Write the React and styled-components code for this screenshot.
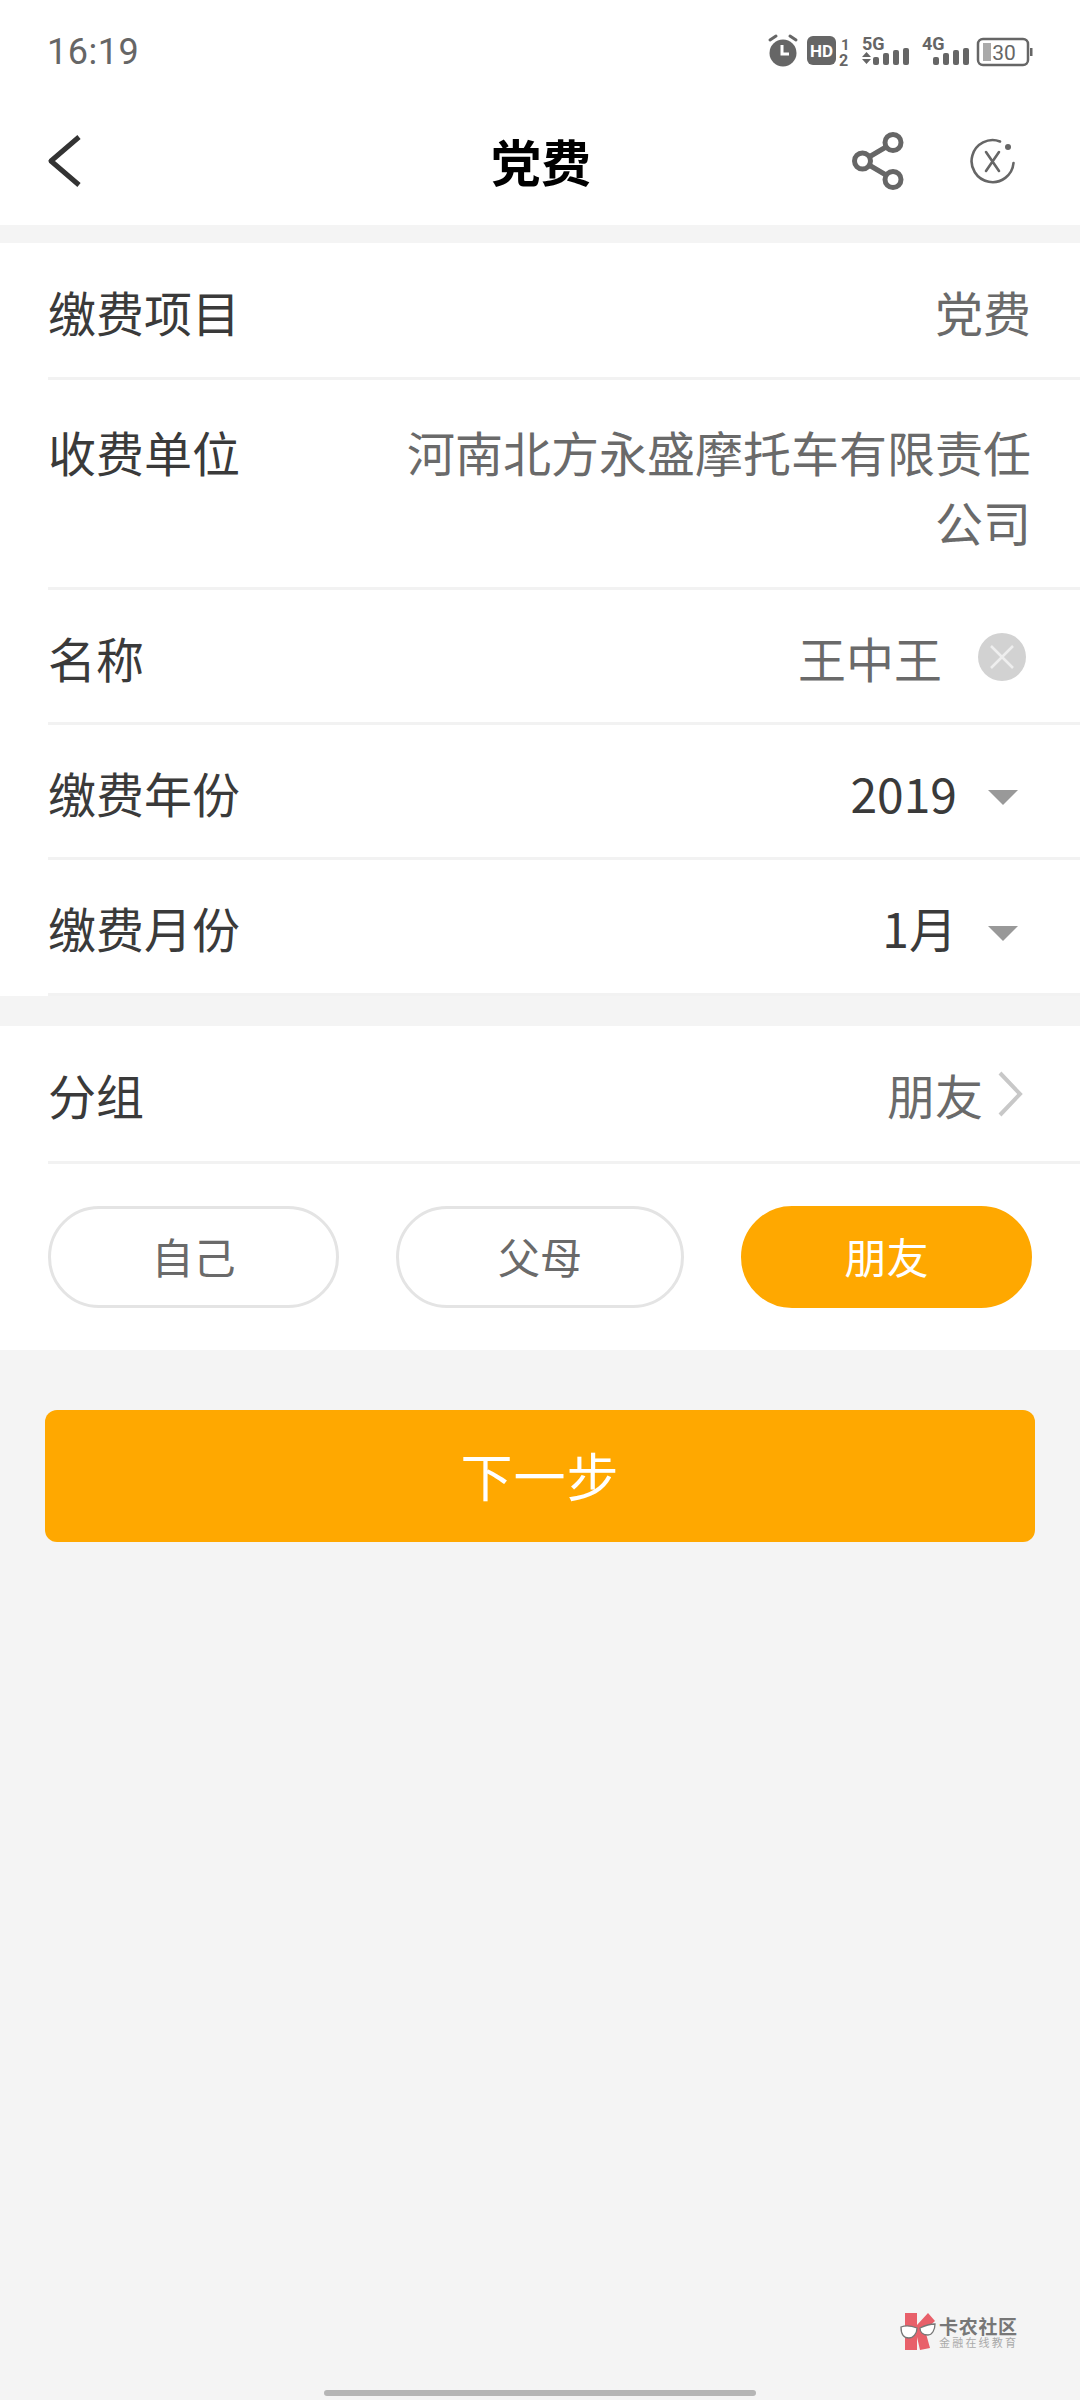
import React from 'react';
import styled, { createGlobalStyle } from 'styled-components';

const orange = '#ffa800';
const line = '#f2f2f2';
const grey = '#f4f4f4';
const cjk = '"Noto Sans CJK SC", "Noto Sans", sans-serif';

const Global = createGlobalStyle`
  html, body { margin: 0; padding: 0; background: ${grey}; }
  * { box-sizing: border-box; }
`;

const Page = styled.div`
  position: relative;
  width: 1080px;
  height: 2400px;
  overflow: hidden;
  background: ${grey};
  font-family: ${cjk};
`;

const Top = styled.div`
  height: 225px;
  background: #fff;
`;

const StatusBar = styled.div`
  height: 100px;
  padding: 0 46px 0 47px;
  display: flex;
  align-items: center;
  justify-content: space-between;
  color: #666;
`;

const Clock = styled.span`
  font-family: "Roboto", sans-serif;
  font-size: 36px;
  letter-spacing: 0.5px;
  padding-top: 3px;
`;

const StatusIcons = styled.svg`
  display: block;
  width: 268px;
  height: 40px;
`;

const NavBar = styled.div`
  height: 125px;
  padding: 0 64px 3px 46px;
  display: flex;
  align-items: center;
  justify-content: space-between;
  position: relative;
`;

const NavTitle = styled.h1`
  position: absolute;
  left: 0;
  right: 0;
  top: 29px;
  margin: 0;
  padding-left: 2px;
  text-align: center;
  font-size: 50px;
  line-height: 62px;
  font-weight: 700;
  color: #000;
`;

const NavActions = styled.div`
  display: flex;
  align-items: center;
  gap: 66px;
`;

const Section = styled.section`
  background: #fff;
  margin-top: ${p => p.$top}px;
`;

const Row = styled.div`
  display: flex;
  justify-content: space-between;
  align-items: ${p => (p.$tall ? 'flex-start' : 'center')};
  height: ${p => p.$h}px;
  margin-left: 48px;
  padding: ${p => (p.$tall ? '36px 49px 0 0' : '1px 49px 0 0')};
  border-bottom: 3px solid ${line};
`;

const Label = styled.span`
  font-size: 48px;
  line-height: 70px;
  color: #3a3a3a;
  white-space: nowrap;
`;

const Value = styled.span`
  font-size: 48px;
  line-height: 70px;
  color: ${p => (p.$dark ? '#3a3a3a' : '#6a6a6a')};
  text-align: right;
  width: ${p => (p.$wrap ? '625px' : 'auto')};
`;

const ValueGroup = styled.div`
  display: flex;
  align-items: center;
  gap: ${p => p.$gap}px;
  padding-right: ${p => p.$pad || 0}px;
`;

const Caret = styled.span`
  display: block;
  width: 0;
  height: 0;
  margin-top: 12px;
  border-left: 15px solid transparent;
  border-right: 15px solid transparent;
  border-top: 15px solid #999;
`;

const Pills = styled.div`
  height: 186px;
  padding: 42px 48px 42px 48px;
  display: flex;
  justify-content: space-between;
`;

const Pill = styled.div`
  width: ${p => p.$w}px;
  height: 102px;
  border-radius: 51px;
  padding-bottom: 4px;
  display: flex;
  align-items: center;
  justify-content: center;
  font-size: 42px;
  color: ${p => (p.$on ? '#fff' : '#6a6a6a')};
  background: ${p => (p.$on ? orange : '#fff')};
  border: 3px solid ${p => (p.$on ? orange : '#e4e4e4')};
`;

const NextButton = styled.button`
  display: block;
  width: 990px;
  height: 132px;
  margin: 60px 0 0 45px;
  padding: 0 0 4px;
  border: none;
  border-radius: 12px;
  background: ${orange};
  color: #fff;
  font-family: ${cjk};
  font-size: 52px;
  letter-spacing: 1px;
`;

const Watermark = styled.div`
  position: absolute;
  left: 900px;
  top: 2313px;
  display: flex;
  align-items: center;
  gap: 3px;
  color: #777;
`;

const MarkText = styled.div`
  display: flex;
  flex-direction: column;
  align-items: flex-start;
`;

const MarkTitle = styled.span`
  font-size: 19px;
  line-height: 20px;
  font-weight: 700;
  letter-spacing: 0.7px;
`;

const MarkSub = styled.span`
  font-size: 11px;
  line-height: 13px;
  letter-spacing: 2.2px;
  color: #aaa;
`;

const HomeBar = styled.div`
  position: absolute;
  left: 324px;
  top: 2390px;
  width: 432px;
  height: 6px;
  border-radius: 3px;
  background: #b5b5b5;
`;

const Bars = ({ x }) => (
  <g fill="#666">
    {[8, 12, 15, 17].map((h, i) => (
      <rect key={i} x={x + i * 10} y={35 - h} width="6" height={h} rx="2" />
    ))}
  </g>
);

const StatusGlyphs = () => (
  <StatusIcons viewBox="0 0 268 40">
    <g stroke="#666" strokeWidth="3" fill="none" strokeLinecap="round">
      <path d="M4 10l6-4M24 6l6 4" />
    </g>
    <circle cx="17" cy="23" r="13.5" fill="#666" />
    <path d="M16 15v9h7" stroke="#fff" strokeWidth="3" fill="none" />
    <rect x="41" y="6" width="29" height="29" rx="6" fill="#666" />
    <text x="55.5" y="26.5" textAnchor="middle" fontSize="17" fontWeight="700" fontFamily="Roboto" fill="#fff">HD</text>
    <text x="75" y="20" fontSize="15" fontWeight="700" fontFamily="Roboto" fill="#666">1</text>
    <text x="73" y="36" fontSize="16" fontWeight="700" fontFamily="Roboto" fill="#666">2</text>
    <text x="96" y="20" fontSize="18" fontWeight="700" fontFamily="Roboto" fill="#666">5G</text>
    <path d="M96 27l4.500-5 4.500 5zM96 29h9l-4.500 5z" fill="#666" />
    <Bars x={107} />
    <text x="156" y="20" fontSize="18" fontWeight="700" fontFamily="Roboto" fill="#666">4G</text>
    <Bars x={167} />
    <rect x="212" y="9" width="50" height="26" rx="5" fill="#fff" stroke="#666" strokeWidth="2.5" />
    <rect x="217" y="13" width="8" height="18" fill="#aaa" />
    <text x="238" y="30" textAnchor="middle" fontSize="21" fontFamily="Roboto" fill="#666">30</text>
    <rect x="264" y="18" width="2.500" height="8" fill="#666" />
  </StatusIcons>
);

const BackIcon = () => (
  <svg width="36" height="52" viewBox="0 0 36 52">
    <path d="M33 2L5 26l28 24" fill="none" stroke="#333" strokeWidth="5" strokeLinejoin="round" />
  </svg>
);

const ShareIcon = () => (
  <svg width="52" height="58" viewBox="0 0 52 58">
    <g fill="none" stroke="#666" strokeWidth="5">
      <circle cx="41" cy="10.500" r="8" />
      <circle cx="41" cy="47.500" r="8" />
      <circle cx="10.500" cy="29" r="8" />
      <path d="M17 25l17-10M17 33l17 10" />
    </g>
  </svg>
);

const CloseRing = () => (
  <svg width="46" height="46" viewBox="0 0 46 46">
    <g fill="none" stroke="#666" strokeWidth="2.6" strokeLinecap="round">
      <path d="M30 3.500A21 21 0 1 0 43.500 25" />
      <path d="M16 14l13 19M29 14L16 33" />
    </g>
    <circle cx="38" cy="9" r="3" fill="#666" />
  </svg>
);

const ClearIcon = () => (
  <svg width="48" height="48" viewBox="0 0 48 48">
    <circle cx="24" cy="24" r="24" fill="#d2d2d2" />
    <path d="M13 13l22 22M35 13L13 35" stroke="#eee" strokeWidth="2.500" />
  </svg>
);

const ChevronIcon = () => (
  <svg width="26" height="46" viewBox="0 0 26 46">
    <path d="M3 2l20 21L3 44" fill="none" stroke="#c8c8c8" strokeWidth="4" />
  </svg>
);

const KanongLogo = () => (
  <svg width="36" height="38" viewBox="0 0 36 38">
    <path d="M5 0h12v12L28 0l7 8-10 9 5 18-10 2-3-13v13H5z" fill="#e8606a" />
    <g fill="#fff" stroke="#777" strokeWidth="1.3">
      <path d="M1 14c5-2 11-1 16 1 0 6-4 10-8 10-5 0-8-4-8-11z" />
      <path d="M20 15c4-2 10-4 15-4 0 6-3 11-7 11-5 0-8-3-8-7z" />
    </g>
  </svg>
);

const App = () => (
  <Page>
    <Global />
    <Top>
      <StatusBar>
        <Clock>16:19</Clock>
        <StatusGlyphs />
      </StatusBar>
      <NavBar>
        <BackIcon />
        <NavTitle>党费</NavTitle>
        <NavActions>
          <ShareIcon />
          <CloseRing />
        </NavActions>
      </NavBar>
    </Top>

    <Section $top={18}>
      <Row $h={137}>
        <Label>缴费项目</Label>
        <Value>党费</Value>
      </Row>
      <Row $h={210} $tall>
        <Label>收费单位</Label>
        <Value $wrap>河南北方永盛摩托车有限责任公司</Value>
      </Row>
      <Row $h={135}>
        <Label>名称</Label>
        <ValueGroup $gap={36} $pad={5}>
          <Value>王中王</Value>
          <ClearIcon />
        </ValueGroup>
      </Row>
      <Row $h={135}>
        <Label>缴费年份</Label>
        <ValueGroup $gap={31} $pad={13}>
          <Value $dark>2019</Value>
          <Caret />
        </ValueGroup>
      </Row>
      <Row $h={136}>
        <Label>缴费月份</Label>
        <ValueGroup $gap={31} $pad={13}>
          <Value $dark>1月</Value>
          <Caret />
        </ValueGroup>
      </Row>
    </Section>

    <Section $top={30}>
      <Row $h={138}>
        <Label>分组</Label>
        <ValueGroup $gap={14} $pad={8}>
          <Value>朋友</Value>
          <ChevronIcon />
        </ValueGroup>
      </Row>
      <Pills>
        <Pill $w={291}>自己</Pill>
        <Pill $w={288}>父母</Pill>
        <Pill $w={291} $on>朋友</Pill>
      </Pills>
    </Section>

    <NextButton>下一步</NextButton>

    <Watermark>
      <KanongLogo />
      <MarkText>
        <MarkTitle>卡农社区</MarkTitle>
        <MarkSub>金融在线教育</MarkSub>
      </MarkText>
    </Watermark>
    <HomeBar />
  </Page>
);

export default App;
